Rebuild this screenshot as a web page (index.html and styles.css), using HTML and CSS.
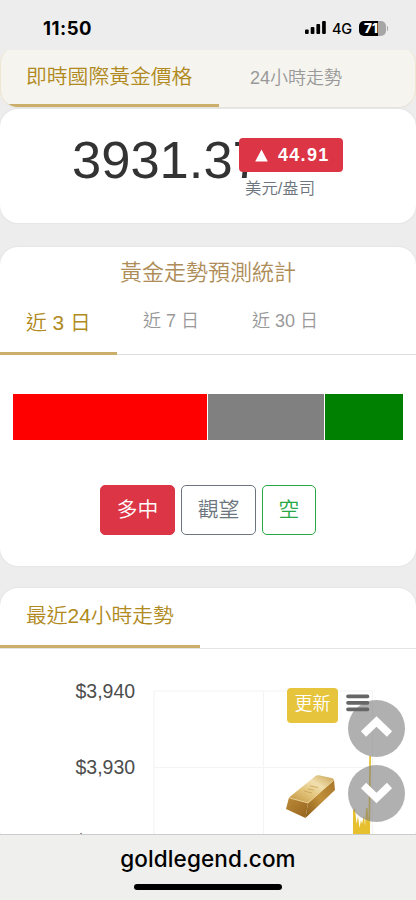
FILE: index.html
```html
<!DOCTYPE html>
<html lang="zh-Hant">
<head>
<meta charset="utf-8">
<meta name="viewport" content="width=device-width, initial-scale=1">
<title>goldlegend.com</title>
<link rel="stylesheet" href="styles.css">
</head>
<body>
<div class="screen">
  <header class="status">
    <span class="time">11:50</span>
    <div class="status-right">
      <svg class="signal" width="21" height="13" viewBox="0 0 21 13"><rect x="0" y="8.5" width="3.7" height="4.5" rx="1"/><rect x="5.7" y="6" width="3.7" height="7" rx="1"/><rect x="11.4" y="3" width="3.7" height="10" rx="1"/><rect x="17.1" y="0" width="3.7" height="13" rx="1"/></svg>
      <span class="net">4G</span>
      <span class="battery">71</span>
    </div>
  </header>

  <main class="content">
    <div class="sticky-clip">
      <nav class="tabs sticky-tabs">
        <span class="tab active">即時國際黃金價格</span>
        <span class="tab day-tab">24小時走勢</span>
      </nav>
    </div>

    <section class="card price-card">
      <div class="price">3931.37</div>
      <div class="change">
        <div class="badge"><svg width="13" height="13" viewBox="0 0 13 13"><path d="M6.5 0.5 12.8 12.5H.2Z" fill="#fff"/></svg><span>44.91</span></div>
        <div class="unit">美元/盎司</div>
      </div>
    </section>

    <section class="card forecast">
      <h2>黃金走勢預測統計</h2>
      <nav class="tabs range-tabs">
        <span class="tab active">近 3 日</span>
        <span class="tab">近 7 日</span>
        <span class="tab">近 30 日</span>
      </nav>
      <div class="ratio"><i class="up"></i><i class="flat"></i><i class="down"></i></div>
      <div class="votes">
        <button class="vote bull">多中</button>
        <button class="vote wait">觀望</button>
        <button class="vote bear">空</button>
      </div>
    </section>

    <section class="card trend">
      <nav class="tabs trend-tabs"><span class="tab active">最近24小時走勢</span></nav>
      <div class="chart">
        <svg class="plot" width="416" height="186" viewBox="0 649 416 186">
          <defs>
            <linearGradient id="top" x1="0" y1="1" x2="1" y2="0"><stop offset="0" stop-color="#c1913c"/><stop offset=".4" stop-color="#e3c57c"/><stop offset=".65" stop-color="#f0dfae"/><stop offset="1" stop-color="#c9a04e"/></linearGradient>
            <linearGradient id="side" x1="0" y1="1" x2="1" y2="0"><stop offset="0" stop-color="#8a5c18"/><stop offset=".5" stop-color="#c0903a"/><stop offset="1" stop-color="#a8752a"/></linearGradient>
            <linearGradient id="end" x1="0" y1="0" x2="1" y2="1"><stop offset="0" stop-color="#bd8c38"/><stop offset="1" stop-color="#94621d"/></linearGradient>
          </defs>
          <path d="M153.5 691H372.5M153.5 767.5H372.5M154 691V835M263.5 691V835M372.5 691V835" fill="none" stroke="#f4f4f4" stroke-width="1.2"/>
          <text x="75.500" y="698">$3,940</text>
          <text x="75.500" y="773.500">$3,930</text>
          <text x="75.500" y="848">$3,920</text>
          <path d="M353 835V810L355 808.500 356.500 824L358 816L359.500 828L361 820L362 824L364 815L365 826L366 808L367.500 808L368.500 820L369.300 756L371 756L370 835Z" fill="#e6c02e"/>
          <path d="M289 797.500 315.500 776Q317 775 319 775.300L332.500 778.300Q334.500 779 333.500 780.500L308 803Z" fill="url(#top)"/>
          <path d="M289 797.500 308 803 305.500 818 286 809Z" fill="url(#end)"/>
          <path d="M308 803 334 780 335 790 305.500 818Z" fill="url(#side)"/>
          <path d="M289 797.800 308 803 333.500 780.500" fill="none" stroke="#f0dca0" stroke-width=".8"/>
          <path d="M310 786l8 1.500M308 789l6 1M304 791l8 2" stroke="#c49c50" stroke-width=".7"/>
        </svg>
        <button class="refresh">更新</button>
        <div class="scrollers">
          <svg width="57" height="57" viewBox="0 0 57 57"><circle cx="28.500" cy="28.500" r="28.500"/><path d="M15.500 34 28.500 21.500 41.500 34"/></svg>
          <svg width="57" height="57" viewBox="0 0 57 57"><circle cx="28.500" cy="28.500" r="28.500"/><path d="M15.500 20.500 28.500 33 41.500 20.500"/></svg>
        </div>
        <svg class="menu" width="24" height="18" viewBox="0 0 24 18"><path d="M2 2.300H21.500M2 8.800H21.500M2 15.300H21.500" stroke="#666" stroke-width="3.700" stroke-linecap="round"/></svg>
      </div>
    </section>
  </main>

  <footer class="browser-bar">
    <div class="domain">goldlegend.com</div>
    <div class="home"></div>
  </footer>
</div>
</body>
</html>
```
FILE: styles.css
```css
* { box-sizing: border-box; }
body { margin: 0; background: #ededed; font-family: "Liberation Sans", "Noto Sans CJK TC", sans-serif; font-weight: 350; }
.screen { width: 416px; height: 900px; display: flex; flex-direction: column; overflow: hidden; background: #ededed; }
.status { height: 50px; flex: none; display: flex; justify-content: space-between; padding: 18px 28px 0 43px; font-family: Inter, sans-serif; color: #000; }
.time { font-size: 18.5px; line-height: 20px; font-weight: 700; letter-spacing: .5px; }
.status-right { display: flex; align-items: center; height: 20px; }
.signal { margin: -2px 1px 0 0; }
.net { font-size: 14.5px; font-weight: 500; margin-left: 5px; width: 22px; letter-spacing: -.2px; }
.battery { position: relative; margin-left: 5px; width: 27px; height: 15px; border-radius: 5px; background: linear-gradient(90deg, #000 72%, #a6a6a6 72%); color: #fff; font-size: 13.5px; line-height: 15px; font-weight: 800; padding-left: 5px; margin-right: 2px; }
.battery::after { content: ""; position: absolute; right: -2px; top: 5px; width: 1.5px; height: 5px; border-radius: 0 2px 2px 0; background: #a6a6a6; }
.content { height: 784px; flex: none; overflow: hidden; }
.tabs { display: flex; color: #999; font-size: 18px; }
.tab { display: block; white-space: nowrap; }
.tab.active { color: #b08a20; font-size: 20.8px; border-bottom: 3px solid #cbae6a; }
.sticky-clip { height: 58px; overflow: hidden; }
.sticky-tabs { height: 62px; margin-top: -4px; background: #f5f4ef; border: 1px solid #e5d3a0; border-top: 0; border-bottom-color: #e6e4de; border-left-color: #eee6d0; border-right-color: #eee6d0; border-radius: 18px; overflow: hidden; }
.sticky-tabs .tab { line-height: 64px; }
.sticky-tabs .active { width: 217.500px; padding-left: 25px; height: 61px; line-height: 62px; }
.day-tab { padding-left: 31.500px; }
.card { background: #fff; border-radius: 18px; box-shadow: 0 0 2px rgba(0,0,0,.1); }
.price-card { position: relative; height: 114px; margin-top: 1px; padding: 21px 0 0 72px; }
.price { width: 203px; font-size: 52.500px; line-height: 60px; color: #333; }
.change { position: absolute; left: 239px; top: 29px; }
.badge { display: flex; align-items: center; width: 104px; height: 34px; padding-left: 16px; gap: 10px; border-radius: 4px; background: #dc3545; color: #fff; font-size: 18px; font-weight: 700; letter-spacing: 1.3px; }
.unit { padding-left: 6px; font-size: 16.400px; line-height: 33px; color: #6c757d; }
.forecast { height: 319px; margin-top: 24px; padding-top: 10px; }
h2 { margin: 0; font-size: 22px; line-height: 32px; font-weight: 350; text-align: center; color: #ae8c57; }
.range-tabs { height: 66px; border-bottom: 1px solid #dedee2; }
.range-tabs .tab { line-height: 64px; padding-left: 26px; }
.range-tabs .active { width: 117px; height: 66px; line-height: 67px; }
.range-tabs .tab:nth-child(3) { padding-left: 53px; }
.ratio { display: grid; grid-template-columns: 194px 116px 78px; gap: 1px; height: 46px; margin: 39px 13px 0; }
.up { background: red; }
.flat { background: gray; }
.down { background: green; }
.votes { display: flex; justify-content: center; gap: 6px; margin-top: 45px; }
.vote { height: 50px; width: 75px; padding: 0 0 4px; border-radius: 5px; border: 1.500px solid; background: #fff; font: 350 20.800px "Liberation Sans", "Noto Sans CJK TC", sans-serif; }
.bull { background: #dc3545; border-color: #dc3545; color: #fff; }
.wait { color: #6c757d; }
.bear { width: 54px; color: #28a745; }
.trend { height: 260px; margin-top: 22px; }
.trend-tabs { height: 61px; border-bottom: 1px solid #e4e4e4; }
.trend-tabs .active { width: 200px; height: 60px; line-height: 56px; padding-left: 26px; }
.chart { position: relative; height: 186px; }
.plot { display: block; }
.plot text { font: 19.500px "Liberation Sans", sans-serif; fill: #4d4d4d; }
.refresh { position: absolute; left: 287px; top: 39px; width: 51px; height: 35px; padding: 0 0 7px; border: 0; border-radius: 4px; background: #e6c43c; color: #fff; font: 350 18px "Noto Sans CJK TC", sans-serif; }
.menu { position: absolute; left: 346px; top: 45px; }
.scrollers { position: absolute; left: 347.500px; top: 51px; display: flex; flex-direction: column; gap: 8px; }
.scrollers circle { fill: rgba(128,128,128,.62); }
.scrollers path { fill: none; stroke: #fff; stroke-width: 7.500; }
.browser-bar { height: 66px; flex: none; background: #efefee; border-top: 1px solid #ccc; text-align: center; }
.domain { margin-top: 10px; font: 500 22.500px/28px Inter, sans-serif; letter-spacing: .1px; color: #000; }
.home { width: 148px; height: 6px; border-radius: 3px; margin: 10.500px auto 0; background: #000; }
```
